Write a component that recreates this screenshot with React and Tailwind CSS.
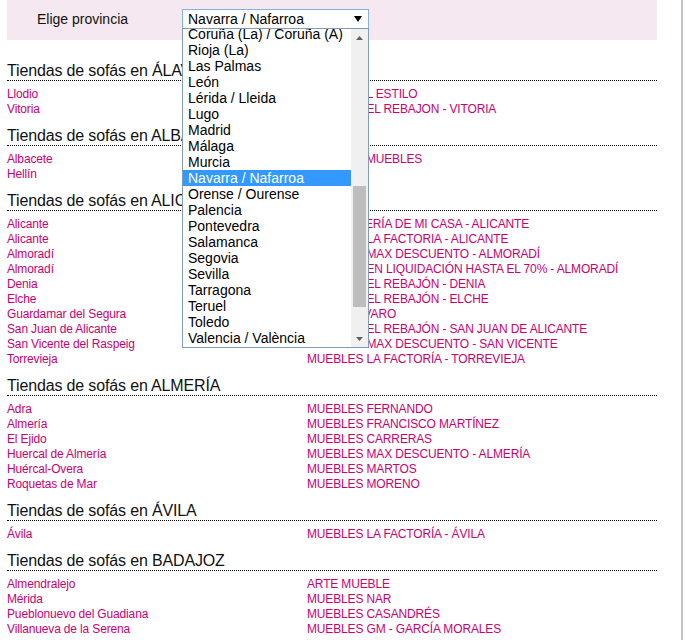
import React from 'react';

const provincias = [
    'Coruña (La) / Coruña (A)',
    'Rioja (La)',
    'Las Palmas',
    'León',
    'Lérida / Lleida',
    'Lugo',
    'Madrid',
    'Málaga',
    'Murcia',
    'Navarra / Nafarroa',
    'Orense / Ourense',
    'Palencia',
    'Pontevedra',
    'Salamanca',
    'Segovia',
    'Sevilla',
    'Tarragona',
    'Teruel',
    'Toledo',
    'Valencia / València',
];

const secciones = [
    {
        provincia: 'ÁLAVA',
        tiendas: [
            ['Llodio', 'SOFÁS DEL ESTILO'],
            ['Vitoria', 'MUEBLES EL REBAJON - VITORIA'],
        ],
    },
    {
        provincia: 'ALBACETE',
        tiendas: [
            ['Albacete', 'DISEÑO Y MUEBLES'],
            ['Hellín', ''],
        ],
    },
    {
        provincia: 'ALICANTE',
        tiendas: [
            ['Alicante', 'ARTE GALERÍA DE MI CASA - ALICANTE'],
            ['Alicante', 'MUEBLES LA FACTORIA - ALICANTE'],
            ['Almoradí', 'MUEBLES MAX DESCUENTO - ALMORADÍ'],
            ['Almoradí', 'MUEBLES EN LIQUIDACIÓN HASTA EL 70% - ALMORADÍ'],
            ['Denia', 'MUEBLES EL REBAJÓN - DENIA'],
            ['Elche', 'MUEBLES EL REBAJÓN - ELCHE'],
            ['Guardamar del Segura', 'SOFÁS ÁLVARO'],
            ['San Juan de Alicante', 'MUEBLES EL REBAJÓN - SAN JUAN DE ALICANTE'],
            ['San Vicente del Raspeig', 'MUEBLES MAX DESCUENTO - SAN VICENTE'],
            ['Torrevieja', 'MUEBLES LA FACTORÍA - TORREVIEJA'],
        ],
    },
    {
        provincia: 'ALMERÍA',
        tiendas: [
            ['Adra', 'MUEBLES FERNANDO'],
            ['Almería', 'MUEBLES FRANCISCO MARTÍNEZ'],
            ['El Ejido', 'MUEBLES CARRERAS'],
            ['Huercal de Almería', 'MUEBLES MAX DESCUENTO - ALMERÍA'],
            ['Huércal-Overa', 'MUEBLES MARTOS'],
            ['Roquetas de Mar', 'MUEBLES MORENO'],
        ],
    },
    {
        provincia: 'ÁVILA',
        tiendas: [['Ávila', 'MUEBLES LA FACTORÍA - ÁVILA']],
    },
    {
        provincia: 'BADAJOZ',
        tiendas: [
            ['Almendralejo', 'ARTE MUEBLE'],
            ['Mérida', 'MUEBLES NAR'],
            ['Pueblonuevo del Guadiana', 'MUEBLES CASANDRÉS'],
            ['Villanueva de la Serena', 'MUEBLES GM - GARCÍA MORALES'],
        ],
    },
];

export default function App() {
    return (
        <div className="w-[683px] h-[640px] overflow-hidden bg-white border-r-2 border-[#c4c4c4] font-['Liberation_Sans',Arial,sans-serif]">
            <div className="ml-[7px] w-[650px]">
                {/* Selector de provincia */}
                <div className="h-[40px] bg-[#f6e8f0] pt-[9px] flex items-start">
                    <div className="w-[175px] h-[20px] pl-[30px] flex items-center text-[14px] text-[#111]">
                        Elige provincia
                    </div>
                    <div className="relative">
                        <div className="w-[187px] h-[20px] border border-[#7eb4ea] bg-white flex items-center pl-[5px] text-[14px] text-black">
                            <span className="flex-1">Navarra / Nafarroa</span>
                            <svg width="8" height="6" viewBox="0 0 8 6" className="mr-[6px]">
                                <polygon points="0,0 8,0 4,6" fill="#000" />
                            </svg>
                        </div>

                        {/* Lista desplegada */}
                        <div className="absolute left-0 top-[19px] z-10 w-[187px] h-[320px] border border-[#7f9db9] bg-white flex">
                            <div className="flex-1 overflow-hidden">
                                <ul className="-mt-[3px]">
                                    {provincias.map(p => (
                                        <li
                                            key={p}
                                            className={
                                                p === 'Navarra / Nafarroa'
                                                    ? 'h-[16px] leading-[16px] pl-[5px] text-[14px] whitespace-nowrap bg-[#3399ff] text-white'
                                                    : 'h-[16px] leading-[16px] pl-[5px] text-[14px] whitespace-nowrap text-black'
                                            }
                                        >
                                            {p}
                                        </li>
                                    ))}
                                </ul>
                            </div>
                            <div className="w-[17px] bg-[#f0f0f0] flex flex-col">
                                <div className="h-[17px] flex items-center justify-center">
                                    <svg width="7" height="4" viewBox="0 0 7 4">
                                        <polygon points="3.5,0 7,4 0,4" fill="#606060" />
                                    </svg>
                                </div>
                                <div className="h-[140px]" />
                                <div className="h-[121px] mx-[2px] bg-[#bdbdbd]" />
                                <div className="flex-1" />
                                <div className="h-[17px] flex items-center justify-center">
                                    <svg width="7" height="4" viewBox="0 0 7 4">
                                        <polygon points="0,0 7,0 3.5,4" fill="#606060" />
                                    </svg>
                                </div>
                            </div>
                        </div>
                    </div>
                </div>

                {/* Listado de tiendas */}
                <div className="mt-[22px]">
                    {secciones.map(sec => (
                        <div key={sec.provincia} className="mb-[10px]">
                            <h2 className="text-[16px] leading-[18px] tracking-[-0.15px] font-normal text-[#111] border-b border-dotted border-black">
                                Tiendas de sofás en {sec.provincia}
                            </h2>
                            <div className="mt-[6px] grid grid-cols-[300px_1fr] text-[12px] leading-[15px] tracking-[-0.15px] text-[#cc0070]">
                                {sec.tiendas.map(([ciudad, tienda], i) => (
                                    <React.Fragment key={i}>
                                        <span className="h-[15px]">{ciudad}</span>
                                        <span className="h-[15px]">{tienda}</span>
                                    </React.Fragment>
                                ))}
                            </div>
                        </div>
                    ))}
                </div>
            </div>
        </div>
    );
}
